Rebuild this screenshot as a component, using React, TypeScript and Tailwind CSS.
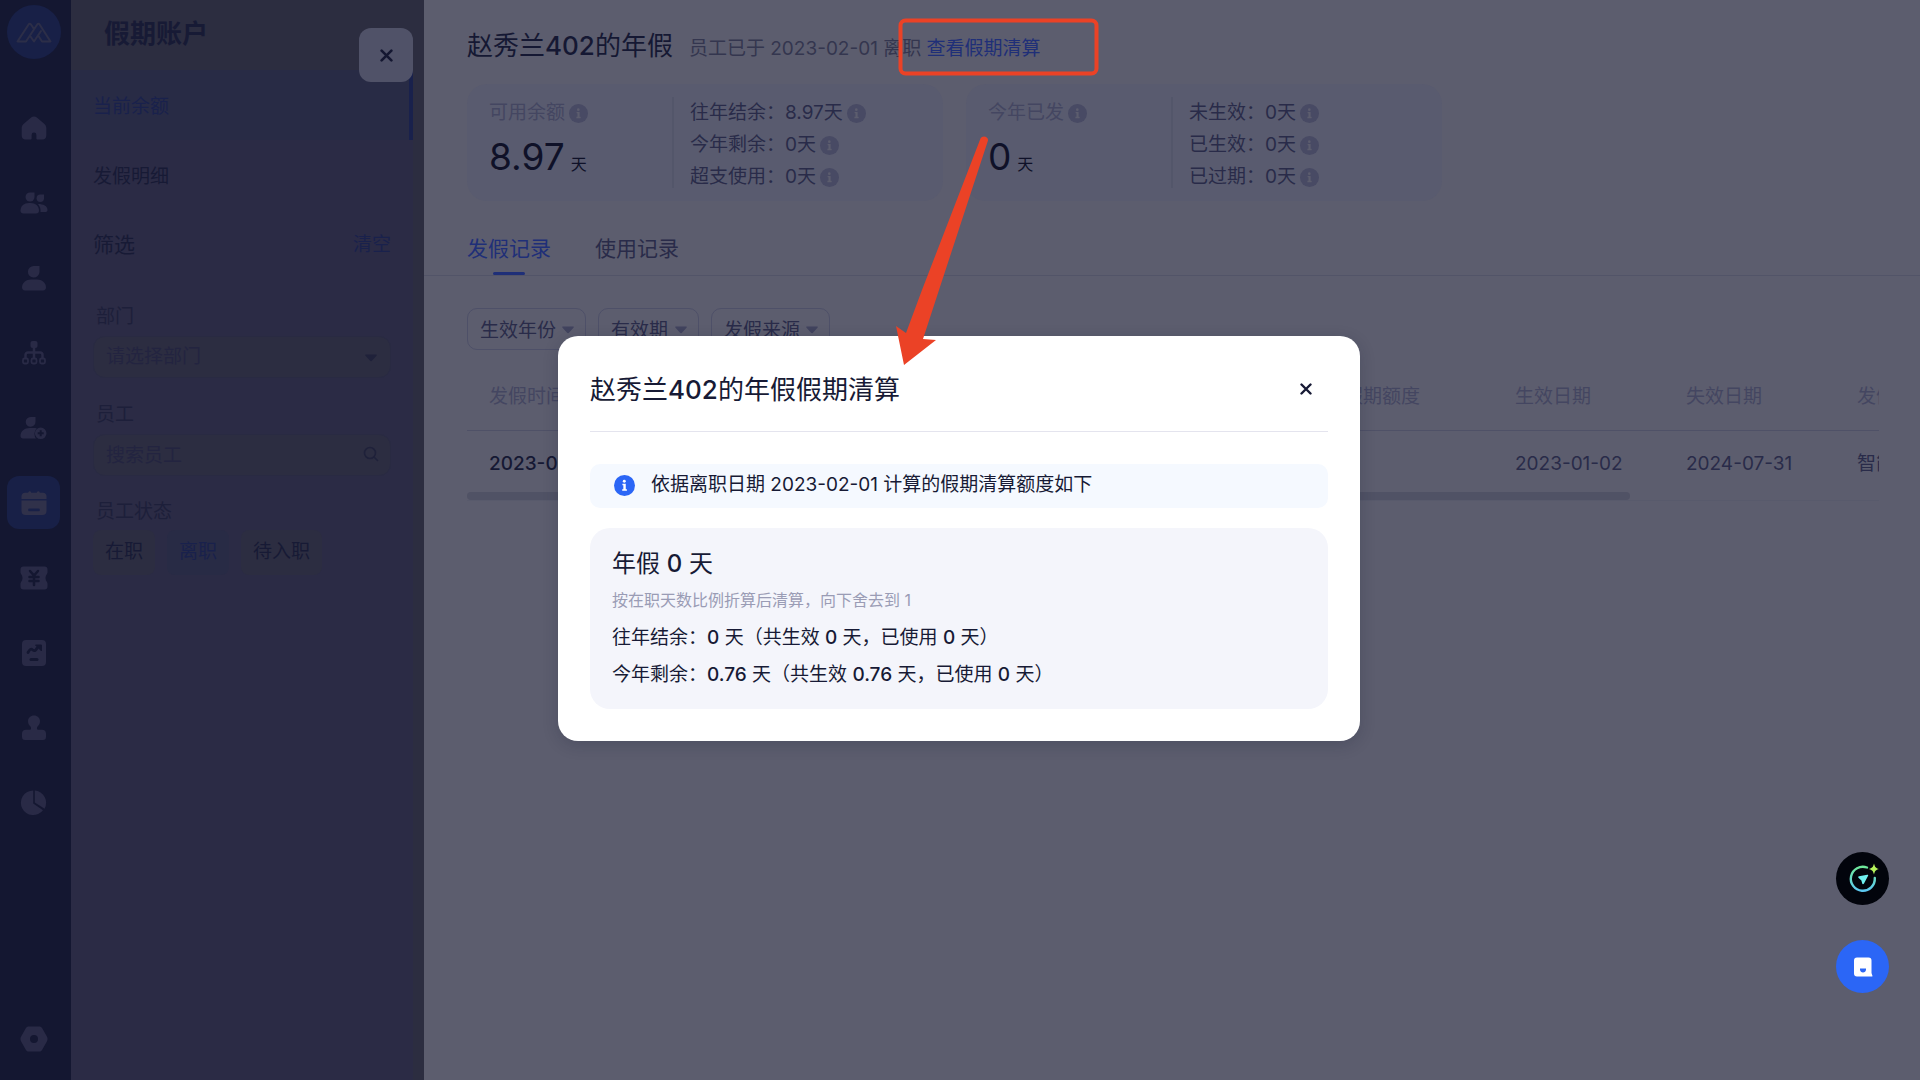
import type { ReactNode } from "react";

function HomeIcon() {
  return (
    <path d="M14 2.5c1 0 2 .4 2.9 1.1l7 5.8c1.5 1.2 2.4 2.7 2.4 4.600v7.500c0 2.500-1.500 4-3.800 4h-5.300c-.5 0-.8-.3-.8-.8V21a2.400 2.400 0 0 0-4.800 0v3.700c0 .5-.3.8-.8.8H5.500c-2.300 0-3.800-1.500-3.800-4V14c0-1.900.9-3.400 2.400-4.600l7-5.800c.9-.7 1.900-1.100 2.900-1.100z" />
  );
}

function UsersIcon() {
  return (
    <>
      <path d="M10 3.5h4.5V8A4.5 4.5 0 1 1 10 3.5z" />
      <path d="M20.3 5.5H24v3.7a3.7 3.7 0 1 1-3.7-3.7z" />
      <path d="M.5 21.5C.5 17 4 14 9 14h1.5c5 0 8.5 3 8.5 7.5 0 2-1 3-3 3H3.5c-2 0-3-1-3-3z" />
      <path d="M18 15c5.5 0 9.5 2 9.5 6 0 1.5-1 2-2.5 2h-4.500c.3-3-.5-5.500-2.500-8z" />
    </>
  );
}

function UserIcon() {
  return (
    <>
      <path d="M14 2h5.5v6A5.8 5.8 0 1 1 14 2z" />
      <path d="M2 23.5C2 19 6 15.5 11 15.5h6c5 0 9 3.5 9 8 0 1.5-1 3-3 3H5c-2 0-3-1.5-3-3z" />
    </>
  );
}

function OrgIcon() {
  return (
    <>
      <rect x="10.5" y="2" width="7" height="7" rx="2" />
      <path
        d="M14 8v11M5.5 19v-3A2.5 2.5 0 0 1 8 13.5h12a2.5 2.5 0 0 1 2.5 2.5v3"
        fill="none"
        stroke="currentColor"
        strokeWidth="2.5"
      />
      <g fill="none" stroke="currentColor" strokeWidth="1.8">
        <rect x="3" y="19.5" width="5" height="5" rx="1.5" />
        <rect x="11.5" y="19.5" width="5" height="5" rx="1.5" />
        <rect x="20" y="19.5" width="5" height="5" rx="1.5" />
      </g>
    </>
  );
}

function UserAddIcon() {
  return (
    <>
      <path d="M10.5 3h5v4.8A4.9 4.9 0 1 1 10.500 3z" />
      <path d="M.5 22C.5 17 4.5 14 9.5 14H14c1 0 2 .1 2.8.4-2.6 2.6-3 7-.8 10.100H3c-1.500 0-2.500-1-2.500-2.500z" />
      <path
        fillRule="evenodd"
        d="M20.7 13.5a5.8 5.8 0 1 1 0 11.6 5.8 5.8 0 0 1 0-11.6zm-1 2.800v2h-2v2h2v2h2v-2h2v-2h-2v-2z"
      />
    </>
  );
}

function CalendarIcon() {
  return (
    <>
      <path d="M1.5 10V7c0-2 1.5-3.3 3.5-3.3h3.2c.3-2 2.7-2 3 0h5.6c.3-2 2.7-2 3 0H23c2 0 3.5 1.3 3.5 3.3v3z" />
      <path
        fillRule="evenodd"
        d="M1.5 11.5h25V22c0 2.5-1.5 4-4 4h-17c-2.5 0-4-1.5-4-4zM9.5 19.5a1.4 1.4 0 0 0 0 2.8h9a1.4 1.4 0 0 0 0-2.800z"
      />
    </>
  );
}

function TicketIcon() {
  return (
    <>
      <path d="M3.5 2.5h21c2 0 3 1 3 3v3c0 1.5-2 2.5-2 5.5s2 4 2 5.5v3c0 2-1 3-3 3h-21c-2 0-3-1-3-3v-3C.5 18 2.5 17 2.5 14S.5 10 .5 8.5v-3c0-2 1-3 3-3z" />
      <path
        d="M10 7l4 4.5L18 7M14 12v9M9.500 13h9M9.500 17h9"
        fill="none"
        stroke="#141731"
        strokeWidth="2.5"
        strokeLinecap="round"
      />
    </>
  );
}

function ReportIcon() {
  return (
    <>
      <rect x="2" y="1" width="24" height="26" rx="4" />
      <path
        d="M8 13.5c2-3.5 3-4 4.8-2.5s3 .5 4.700-2.500"
        fill="none"
        stroke="#141731"
        strokeWidth="2.8"
        strokeLinecap="round"
      />
      <path d="M15.5 6h6v6z" fill="#141731" stroke="#141731" strokeLinejoin="round" />
      <path d="M11 20.5h6" stroke="#141731" strokeWidth="3" strokeLinecap="round" />
    </>
  );
}

function StampIcon() {
  return (
    <path d="M14 1.5c3.5 0 6 2.5 6 5.7 0 2.3-1 3.8-2.2 5-.8.8-.8 1.5-.8 2.300 0 1 .5 1.300 1.500 1.300H22c2.500 0 4 1.500 4 3.700V23c0 2-1 3-3 3H5c-2 0-3-1-3-3v-3.500c0-2.200 1.500-3.700 4-3.700h3.500c1 0 1.500-.3 1.500-1.300 0-.8 0-1.500-.8-2.300C9 11 8 9.500 8 7.200c0-3.200 2.500-5.700 6-5.700z" />
  );
}

function PieIcon() {
  return (
    <>
      <path d="M13.2 1.5v13l9.8 6.7A12.3 12.3 0 1 1 13.200 1.500z" />
      <path d="M14.8 1.5a12.3 12.3 0 0 1 9.8 18.2L14.800 13.400z" />
    </>
  );
}

function SettingsIcon() {
  return (
    <path
      fillRule="evenodd"
      d="M9 1.5h10c1.5 0 2.5.5 3.2 1.8l4.8 8.5c.7 1.4.7 3 0 4.4l-4.8 8.500c-.7 1.300-1.700 1.800-3.200 1.800H9c-1.500 0-2.500-.5-3.200-1.800L1 16.200c-.7-1.400-.7-3 0-4.400l4.800-8.500C6.500 2 7.500 1.500 9 1.500zM14 10a4 4 0 1 0 0 8 4 4 0 0 0 0-8z"
    />
  );
}

function InfoIcon({ className }: { className: string }) {
  return (
    <svg viewBox="0 0 20 20" className={className} aria-hidden="true">
      <circle cx="10" cy="10" r="10" fill="currentColor" />
      <g className="fill-[var(--mark)]">
        <circle cx="9.8" cy="6" r="1.4" />
        <path d="M8 8.3h3.2v5.2h1.1V15H7.8v-1.5h1.1V9.800H8z" />
      </g>
    </svg>
  );
}

function Caret({ className }: { className: string }) {
  return (
    <svg viewBox="0 0 12 8" className={className} aria-hidden="true">
      <path d="M1 .5h10c.8 0 1 .7.5 1.3l-4.6 5c-.5.6-1.3.6-1.8 0l-4.600-5C0 1.200.2.5 1 .5z" fill="currentColor" />
    </svg>
  );
}

function Cross({ className }: { className: string }) {
  return (
    <svg viewBox="0 0 12 12" className={className} aria-hidden="true">
      <path d="M1.5 1.5l9 9M10.5 1.5l-9 9" stroke="currentColor" strokeWidth="2.4" strokeLinecap="round" />
    </svg>
  );
}

const navItems: { name: string; icon: ReactNode; active?: boolean }[] = [
  { name: "首页", icon: <HomeIcon /> },
  { name: "组织", icon: <UsersIcon /> },
  { name: "员工", icon: <UserIcon /> },
  { name: "架构", icon: <OrgIcon /> },
  { name: "入职", icon: <UserAddIcon /> },
  { name: "假期", icon: <CalendarIcon />, active: true },
  { name: "薪酬", icon: <TicketIcon /> },
  { name: "报表", icon: <ReportIcon /> },
  { name: "审批", icon: <StampIcon /> },
  { name: "统计", icon: <PieIcon /> },
];

const cards = [
  {
    label: "可用余额",
    value: "8.97",
    rows: [
      ["往年结余：", "8.97天"],
      ["今年剩余：", "0天"],
      ["超支使用：", "0天"],
    ],
  },
  {
    label: "今年已发",
    value: "0",
    rows: [
      ["未生效：", "0天"],
      ["已生效：", "0天"],
      ["已过期：", "0天"],
    ],
  },
];

const columns = ["发假时间", "", "", "", "", "假期额度", "生效日期", "失效日期", "发假来源"];
const record = ["2023-01-02", "", "", "", "", "", "2023-01-02", "2024-07-31", "智能发放"];

function NavRail() {
  return (
    <nav className="flex w-[71px] shrink-0 flex-col items-center bg-[#141731] pr-1 pt-[5px] pb-1 text-[#292a46]">
      <a href="#" aria-label="主页" className="flex size-[54px] items-center justify-center rounded-full bg-[#182047]">
        <svg viewBox="0 0 36 22" className="h-[22px] w-9" aria-hidden="true">
          <g fill="none" stroke="#2c2e48" strokeWidth="2" strokeLinejoin="round" strokeLinecap="round">
            <path d="M18 8l-3-4.500c-.7-1-1.700-1-2.400 0L1.500 20.500H10L21.200 3.500c.7-1 1.700-1 2.400 0L34.500 20.500H26L22.500 15" />
            <path d="M14.500 15.500l3.500 5 7-10.500" />
          </g>
        </svg>
      </a>
      <div className="mt-[31px] flex flex-col">
        {navItems.map((item) => (
          <a key={item.name} href="#" aria-label={item.name} className="flex h-[75px] items-center justify-center">
            <span
              className={
                item.active
                  ? "flex size-[53px] items-center justify-center rounded-xl bg-[#182047] text-[#30314a]"
                  : "flex size-[53px] items-center justify-center"
              }
            >
              <svg viewBox="0 0 28 28" className="size-7" fill="currentColor" aria-hidden="true">
                {item.icon}
              </svg>
            </span>
          </a>
        ))}
      </div>
      <a href="#" aria-label="设置" className="mt-auto flex h-[75px] items-center justify-center">
        <svg viewBox="0 0 28 28" className="size-7" fill="currentColor" aria-hidden="true">
          <SettingsIcon />
        </svg>
      </a>
    </nav>
  );
}

function FilterPanel() {
  return (
    <aside className="relative flex w-[353px] shrink-0 bg-[#2c2d40] text-[19px]">
      <div className="flex-1">
        <h1 className="flex h-[70px] items-center pb-1 pl-[33px] text-[26px] font-bold text-[#171a35]">假期账户</h1>
        <div className="min-h-[1010px] bg-[#2b2b45]">
          <a
            href="#"
            className="flex h-[70px] items-center border-r-4 border-[#19214c] bg-[#282b45] pt-1 pl-[22px] text-[#19214c]"
          >
            当前余额
          </a>
          <a href="#" className="flex h-[70px] items-center pt-1 pl-[22px] text-[#171a35]">
            发假明细
          </a>
          <div className="flex h-[70px] items-center justify-between px-[22px]">
            <h2 className="text-[21px] text-[#171a35]">筛选</h2>
            <button className="text-[#19214c]">清空</button>
          </div>
          <div className="flex flex-col px-[22px] pt-3.5 text-[#1d1f3a]">
            <label htmlFor="dept" className="flex h-[42px] items-center pt-1 pl-[3px]">
              部门
            </label>
            <div className="relative">
              <select
                id="dept"
                className="h-[42px] w-full appearance-none rounded-xl border border-[#292a42] bg-[#2c2d41] pl-3 text-[#232440]"
              >
                <option>请选择部门</option>
              </select>
              <Caret className="pointer-events-none absolute right-3.5 top-[18px] h-2 w-3 text-[#1f213a]" />
            </div>
            <label htmlFor="staff" className="mt-3.5 flex h-[42px] items-center pt-1 pl-[3px]">
              员工
            </label>
            <div className="relative">
              <input
                id="staff"
                placeholder="搜索员工"
                className="h-[42px] w-full rounded-xl border border-[#292a42] bg-[#2c2d41] pl-3 placeholder:text-[#232440]"
              />
              <svg viewBox="0 0 16 16" className="absolute right-3 top-3 size-4 text-[#1f213a]" aria-hidden="true">
                <g fill="none" stroke="currentColor" strokeWidth="1.6" strokeLinecap="round">
                  <circle cx="7" cy="7" r="5.5" />
                  <path d="M11.5 11.5l3 3" />
                </g>
              </svg>
            </div>
            <p className="mt-3.5 flex h-10 items-center pt-1 pl-[3px]">员工状态</p>
            <div className="flex gap-3 text-[#171a35]">
              <button className="h-[45px] rounded-lg bg-[#2c2d41] px-3">在职</button>
              <button aria-pressed="true" className="h-[45px] rounded-lg bg-[#282b45] px-3 text-[#19214c]">
                离职
              </button>
              <button className="h-[45px] rounded-lg bg-[#2c2d41] px-3">待入职</button>
            </div>
          </div>
        </div>
      </div>
      <div className="w-[11px] shrink-0" />
      <button
        aria-label="关闭"
        className="absolute right-[11px] top-7 flex size-[54px] items-center justify-center rounded-xl bg-[#505268] text-[#141731]"
      >
        <Cross className="size-[13px]" />
      </button>
    </aside>
  );
}

function SummaryCard({ label, value, rows }: (typeof cards)[number]) {
  return (
    <section className="flex h-[117px] w-[476px] rounded-[20px] bg-[#595b6f] py-[13px] pl-[22px]">
      <div className="w-[185px] border-r-2 border-[#53566a]">
        <div className="flex h-8 items-center gap-1 text-[#444661]">
          {label}
          <InfoIcon className="size-[19px] text-[#484a64] [--mark:#5c5d6e]" />
        </div>
        <p className="mt-1 flex items-baseline gap-1.5 leading-[48px] text-[#0f1128]">
          <span className="text-[37px]">{value}</span>
          <span className="text-base">天</span>
        </p>
      </div>
      <dl className="pl-4 text-[#292b49]">
        {rows.map(([name, amount]) => (
          <div key={name} className="flex h-8 items-center">
            <dt>{name}</dt>
            <dd className="flex items-center gap-1">
              {amount}
              <InfoIcon className="size-[19px] text-[#484a64] [--mark:#5c5d6e]" />
            </dd>
          </div>
        ))}
      </dl>
    </section>
  );
}

function Filter({ name, className }: { name: string; className: string }) {
  return (
    <div className={className}>
      <select
        aria-label={name}
        className="h-[42px] w-full appearance-none rounded-[10px] border border-[#4e5068] bg-transparent pt-1 pl-3"
      >
        <option>{name}</option>
      </select>
      <Caret className="pointer-events-none absolute right-3 top-[18px] h-2 w-3 text-[#41435e]" />
    </div>
  );
}

function Detail() {
  return (
    <main className="min-w-0 flex-1 text-[19px] text-[#292b49]">
      <header className="flex h-[84px] items-baseline gap-4 pl-[43px] pt-7">
        <h2 className="text-[26px] leading-9 text-[#151833]">
          赵秀兰<span className="font-medium">402</span>的年假
        </h2>
        <p className="text-[#34364f]">
          员工已于 2023-02-01 离职{" "}
          <a href="#" className="text-[#1f2f78]">
            查看假期清算
          </a>
        </p>
      </header>

      <div className="flex gap-[23px] pl-[43px]">
        {cards.map((card) => (
          <SummaryCard key={card.label} {...card} />
        ))}
      </div>

      <div role="tablist" className="mt-6 flex h-[51px] gap-11 border-b border-[#525468] pl-[43px] text-[21px]">
        <button role="tab" aria-selected="true" className="flex flex-col items-center text-[#1f2f78]">
          <span className="h-[47px] leading-[47px]">发假记录</span>
          <span className="h-1 w-8 rounded-sm bg-[#1f2f78]" />
        </button>
        <button role="tab" aria-selected="false" className="flex flex-col items-center">
          <span className="h-[47px] leading-[47px]">使用记录</span>
        </button>
      </div>

      <div className="flex gap-3 pl-[43px] pt-8">
        <Filter name="生效年份" className="relative w-[119px]" />
        <Filter name="有效期" className="relative w-[101px]" />
        <Filter name="发假来源" className="relative w-[119px]" />
      </div>

      <div className="ml-[43px] mr-[41px] mt-3 overflow-hidden border-b border-[#585a6c]">
        <table className="w-[1539px] table-fixed text-left">
          <thead>
            <tr className="h-[68px] border-b border-[#4f5167] text-[#444661]">
              {columns.map((name, i) => (
                <th key={i} className="whitespace-nowrap pt-0.5 pl-[22px] font-normal">
                  {name}
                </th>
              ))}
            </tr>
          </thead>
          <tbody>
            <tr className="h-[62px]">
              {record.map((text, i) => (
                <td
                  key={i}
                  className={
                    i === 0
                      ? "whitespace-nowrap pt-1.5 pl-[22px] font-medium text-[#151833]"
                      : "whitespace-nowrap pt-1.5 pl-[22px]"
                  }
                >
                  {text}
                </td>
              ))}
            </tr>
          </tbody>
        </table>
        <div className="h-2 w-14/17 rounded-full bg-[#505265]" />
      </div>
    </main>
  );
}

function ClearanceDialog() {
  return (
    <div className="absolute inset-0 flex items-center justify-center pr-0.5 pb-1">
      <div
        role="dialog"
        aria-labelledby="dialog-title"
        className="w-[802px] rounded-[20px] bg-white px-8 pb-8 text-[19px] text-[#171a35] shadow-[0_4px_16px_rgba(20,23,49,0.2)]"
      >
        <div className="flex h-24 items-center justify-between border-b border-[#e4e4ee] pt-3">
          <h2 id="dialog-title" className="text-[26px]">
            赵秀兰<span className="font-medium">402</span>的年假假期清算
          </h2>
          <button aria-label="关闭弹窗" className="mr-4">
            <Cross className="size-3" />
          </button>
        </div>
        <p className="mt-8 flex h-11 items-center gap-4 rounded-[10px] bg-[#f5f9ff] pl-6">
          <InfoIcon className="size-[21px] text-[#2b66f6] [--mark:#fff]" />
          依据离职日期 2023-02-01 计算的假期清算额度如下
        </p>
        <section className="mt-5 rounded-[20px] bg-[#f4f5fb] px-[22px] pb-4 pt-[18px]">
          <h3 className="text-2xl leading-9">
            年假 <b className="font-medium">0</b> 天
          </h3>
          <p className="text-base leading-[37px] text-[#9a9cb5]">按在职天数比例折算后清算，向下舍去到 1</p>
          <p className="leading-[37px]">
            往年结余：<b className="font-medium">0</b> 天（共生效 <b className="font-medium">0</b> 天，已使用{" "}
            <b className="font-medium">0</b> 天）
          </p>
          <p className="leading-[37px]">
            今年剩余：<b className="font-medium">0.76</b> 天（共生效 <b className="font-medium">0.76</b> 天，已使用{" "}
            <b className="font-medium">0</b> 天）
          </p>
        </section>
      </div>
    </div>
  );
}

function Callout() {
  return (
    <svg
      viewBox="0 0 210 360"
      className="pointer-events-none absolute left-[892px] top-[14px] h-[360px] w-[210px]"
      aria-hidden="true"
    >
      <rect x="8.5" y="6.500" width="196" height="53" rx="5" fill="none" stroke="#eb4226" strokeWidth="4" />
      <path d="M88.5 124.5C90 121 96.5 122 96 126.5L47 276l-16 49 13 1-32 25-8-39 10 7 16-43z" fill="#eb4226" />
    </svg>
  );
}

function FloatingButtons() {
  return (
    <div className="absolute right-[31px] bottom-[87px] flex flex-col gap-[35px]">
      <button aria-label="智能助手" className="flex size-[53px] items-center justify-center rounded-full bg-[#02040c]">
        <svg viewBox="0 0 32 32" className="size-8" aria-hidden="true">
          <defs>
            <linearGradient id="ring" x1="0" y1="0" x2="0" y2="1">
              <stop offset="0" stopColor="#6fe89a" />
              <stop offset="1" stopColor="#5cc8f2" />
            </linearGradient>
          </defs>
          <path
            d="M20 4.500A12 12 0 1 0 27.800 15"
            fill="none"
            stroke="url(#ring)"
            strokeWidth="2.4"
            strokeLinecap="round"
          />
          <path
            d="M12 13.200l8.300-1.400c.8-.1 1.100.3.8 1L17 20.600c-.6 1-1.500 1-1.800 0l-.8-3.100-2.700-2.400c-.8-.7-.6-1.700.3-1.900z"
            fill="#6ff0f0"
          />
          <path d="M27 .5c1 3.800 1.700 4.500 5 5.500-3.300 1-4 1.700-5 5.500-1-3.800-1.700-4.500-5.500-5.500 3.800-1 4.500-1.700 5.500-5.500z" fill="#b5f25c" />
        </svg>
      </button>
      <button aria-label="在线客服" className="flex size-[53px] items-center justify-center rounded-full bg-[#2b66f6]">
        <svg viewBox="0 0 20 20" className="size-5" aria-hidden="true">
          <path d="M4 .5h11.5c2 0 3 1 3 3V16l1 3c.1.3 0 .5-.5.5H4c-2 0-3-1-3-3v-13c0-2 1-3 3-3z" fill="#fff" />
          <path d="M7 11.5h6v1c0 4-6 4-6 0z" fill="#2b66f6" />
        </svg>
      </button>
    </div>
  );
}

export default function App() {
  return (
    <div className="relative flex min-h-screen overflow-hidden bg-[#5c5d6e] font-['Inter','Noto_Sans_CJK_SC',sans-serif]">
      <NavRail />
      <FilterPanel />
      <Detail />
      <ClearanceDialog />
      <Callout />
      <FloatingButtons />
    </div>
  );
}
